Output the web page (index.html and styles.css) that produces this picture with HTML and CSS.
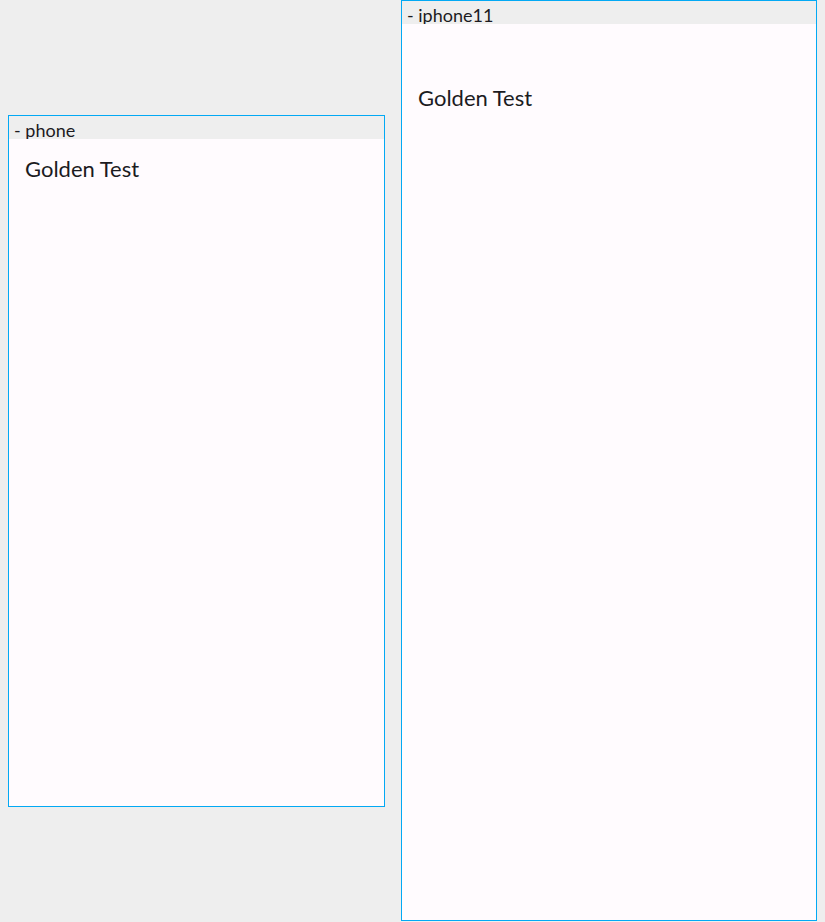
FILE: index.html
```html
<!DOCTYPE html>
<html>
<head>
<meta charset="utf-8">
<link rel="stylesheet" href="styles.css">
</head>
<body>
<div class="stage">
  <div class="device device-phone">
    <div class="label"><span>- phone</span></div>
    <div class="screen">
      <div class="title">Golden Test</div>
    </div>
  </div>
  <div class="device device-iphone11">
    <div class="label"><span>- iphone11</span></div>
    <div class="screen">
      <div class="title">Golden Test</div>
    </div>
  </div>
</div>
</body>
</html>
```
FILE: styles.css
```css
html, body {
  margin: 0;
  padding: 0;
  background: #eeeeee;
}
.stage {
  display: flex;
  align-items: center;
  gap: 16px;
  height: 921px;
  padding-left: 8px;
  font-family: Lato, "Noto Sans", sans-serif;
}
.device {
  border: 1px solid #03a9f4;
  display: flex;
  flex-direction: column;
  flex: none;
}
.device-phone { width: 375px; }
.device-iphone11 { width: 414px; }
.label {
  height: 23px;
  overflow: hidden;
  background: #eeeeee;
  font-size: 18px;
  line-height: 18px;
  color: #1c1b1f;
  padding: 5px 5px 0;
  box-sizing: border-box;
}
.screen {
  background: #fffbfe;
  padding: 16px 16px 0;
  box-sizing: border-box;
}
.device-phone .screen { height: 667px; }
.device-iphone11 .screen { height: 896px; padding-top: 60px; }
.title {
  font-size: 22px;
  line-height: 28px;
  color: #1c1b1f;
}
```
